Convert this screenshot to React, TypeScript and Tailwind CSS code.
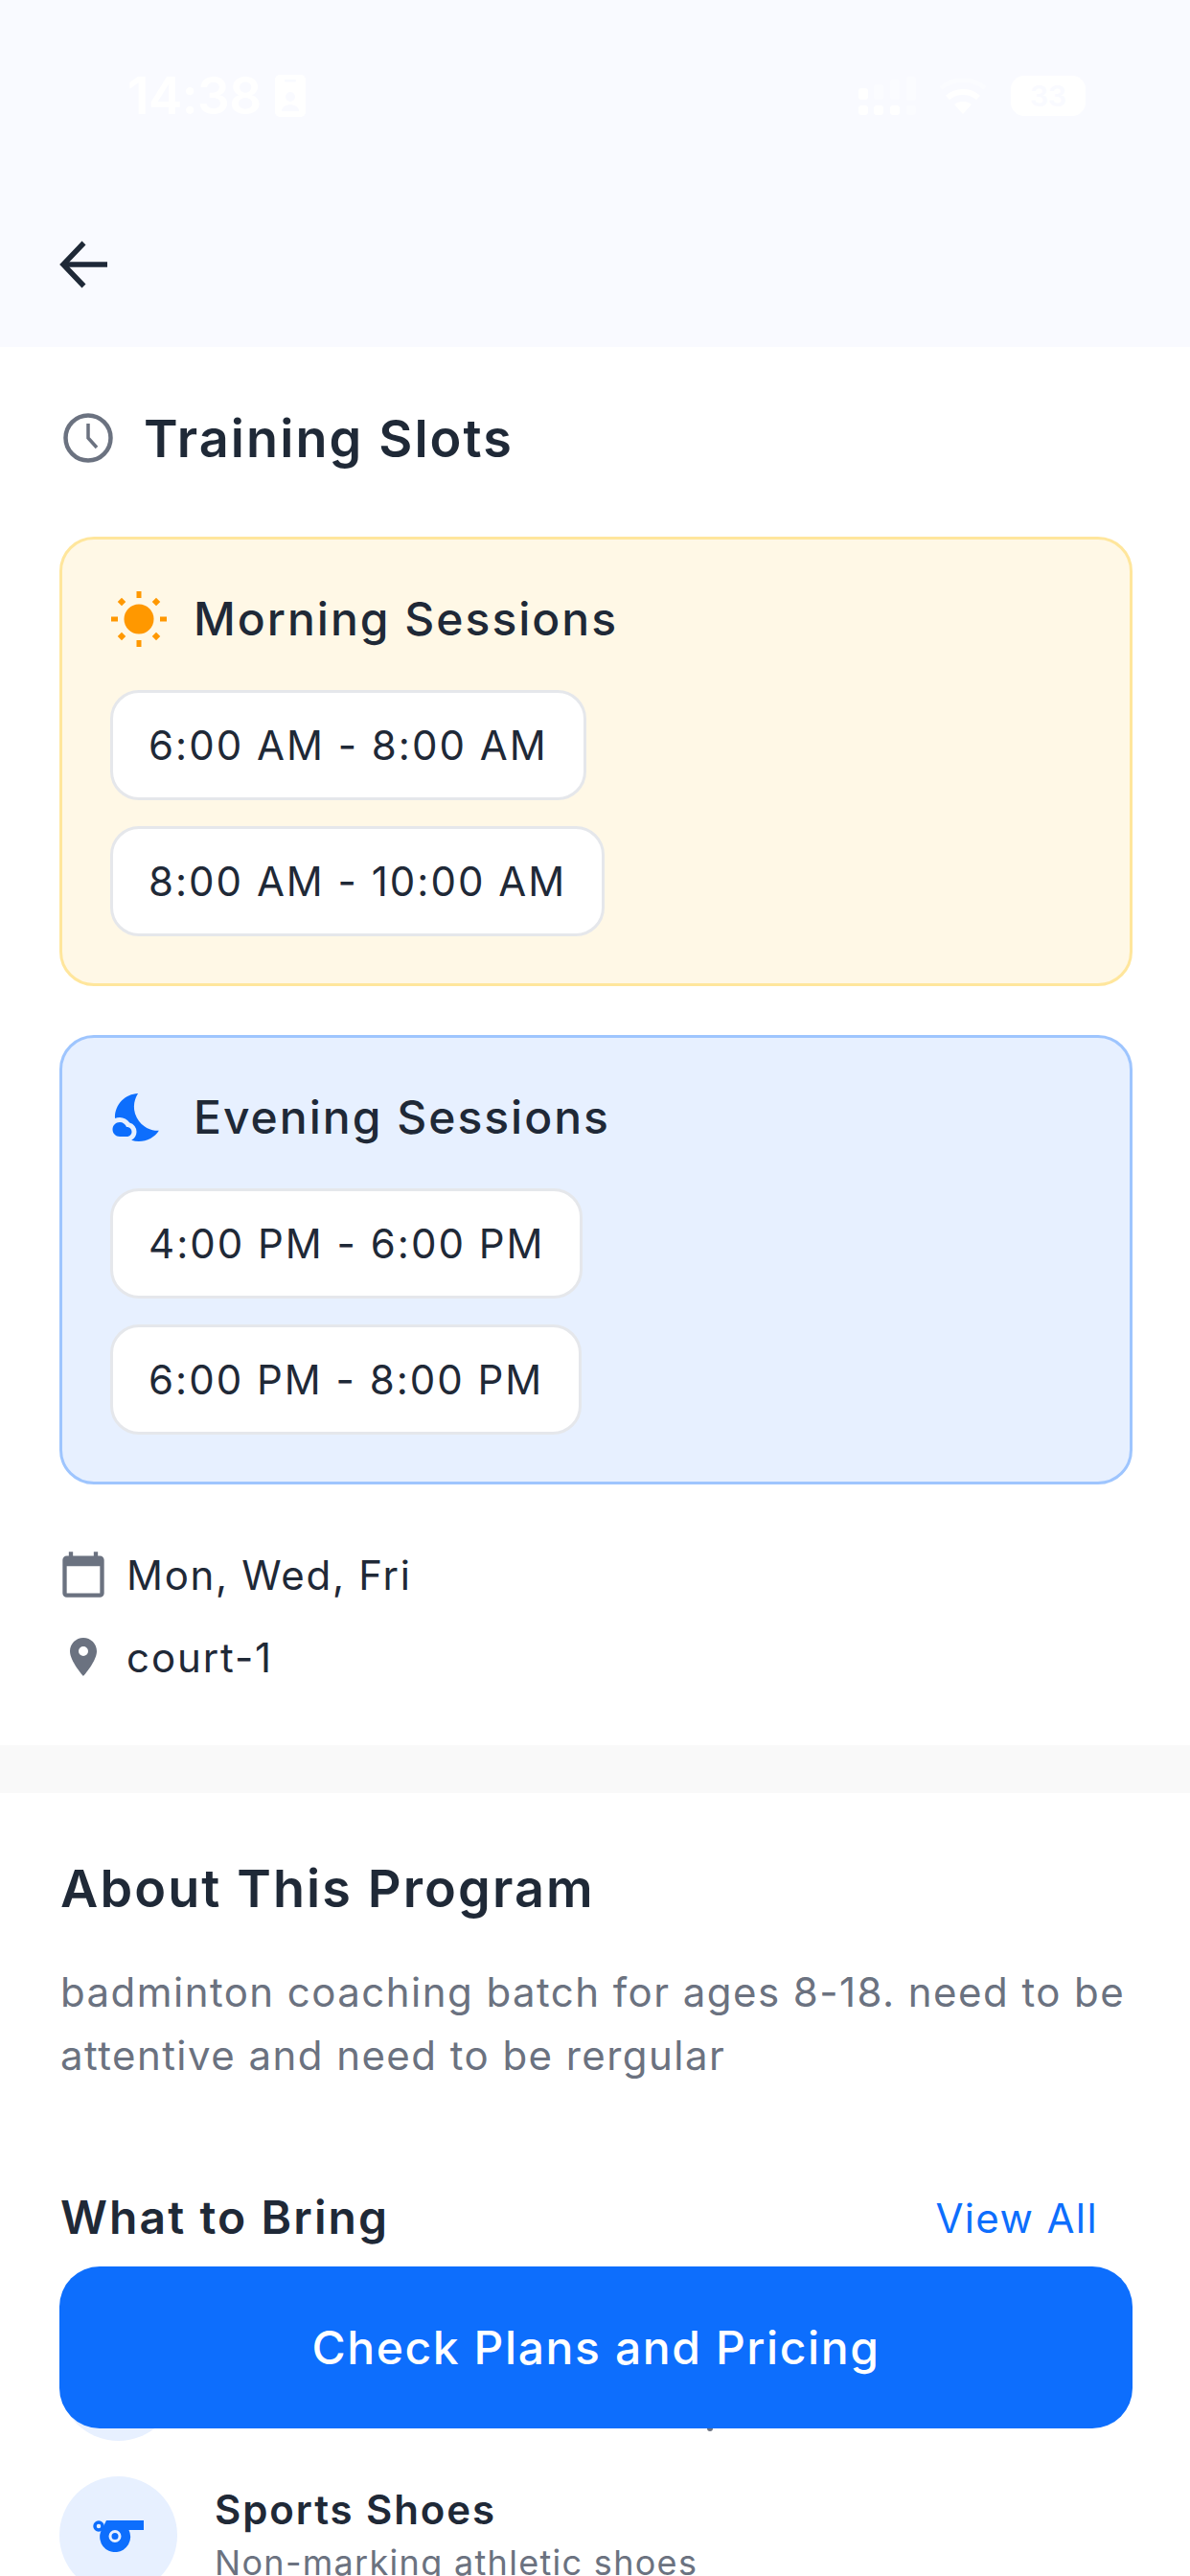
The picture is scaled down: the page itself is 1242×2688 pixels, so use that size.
import React from 'react';
import { MdCalendarToday, MdLocationOn, MdNightsStay } from 'react-icons/md';

const SunIcon = () => (
  <svg viewBox="0 0 60 60" className="w-[60px] h-[60px]" fill="#FF9800">
    <circle cx="30" cy="30" r="15.5" />
    <rect x="27.5" y="1" width="5" height="7" />
    <rect x="27.5" y="52" width="5" height="7" />
    <rect x="1" y="27.5" width="7" height="5" />
    <rect x="52" y="27.5" width="7" height="5" />
    <rect x="9" y="9" width="6" height="6" transform="rotate(45 12 12)" />
    <rect x="45" y="9" width="6" height="6" transform="rotate(45 48 12)" />
    <rect x="9" y="45" width="6" height="6" transform="rotate(45 12 48)" />
    <rect x="45" y="45" width="6" height="6" transform="rotate(45 48 48)" />
  </svg>
);

const WhistleIcon = () => (
  <svg viewBox="0 0 54 34" className="w-[54px] h-[34px]" fill="#0D6EFD">
    <circle cx="6" cy="7" r="4" fill="none" stroke="#0D6EFD" strokeWidth="3.5" />
    <path d="M14 1H53V11H37.5A16 16 0 1 1 8 13 L14 1Z" />
    <circle cx="23" cy="17.5" r="5" fill="none" stroke="#E7F0FF" strokeWidth="3" />
  </svg>
);

const ContactIcon = () => (
  <svg viewBox="0 0 32 44" className="w-[32px] h-[44px]">
    <rect width="32" height="44" rx="5" fill="white" />
    <rect x="10" y="5" width="12" height="2.5" rx="1" fill="#F9FAFF" />
    <circle cx="16" cy="23" r="5" fill="#F9FAFF" />
    <path d="M7 38C7 29 25 29 25 38Z" fill="#F9FAFF" />
  </svg>
);

const SignalIcon = () => (
  <svg viewBox="0 0 60 40" className="w-[60px] h-[40px]" fill="white">
    <rect x="0" y="12" width="10" height="12" rx="3" />
    <rect x="0" y="30" width="10" height="10" rx="3" />
    <rect x="16" y="30" width="10" height="10" rx="3" />
    <rect x="33" y="30" width="10" height="10" rx="3" />
    <rect x="50" y="30" width="10" height="10" rx="3" opacity="0.35" />
    <rect x="16" y="8" width="10" height="16" rx="2" opacity="0.35" />
    <rect x="33" y="3" width="10" height="21" rx="2" opacity="0.35" />
    <rect x="50" y="0" width="10" height="25" rx="2" opacity="0.35" />
  </svg>
);

const WifiIcon = () => (
  <svg viewBox="0 0 50 40" className="w-[50px] h-[40px]" fill="none" stroke="white">
    <path d="M2 12C14 1 36 1 48 12" strokeWidth="5" opacity="0.35" />
    <path d="M9 22C18 14 32 14 41 22" strokeWidth="6" />
    <path d="M16 29C21 25 29 25 34 29L25 39Z" fill="white" stroke="none" />
  </svg>
);

const Slot = ({ text }: { text: string }) => (
  <div className="self-start h-[115px] px-[37px] flex items-center bg-white border-[3px] border-[#E5E7EB] rounded-[30px] text-[42px] tracking-[2px] text-[#1F2937]">
    {text}
  </div>
);

const SessionCard = ({
  title,
  icon,
  slots,
  box,
}: {
  title: string;
  icon: React.ReactNode;
  slots: string[];
  box: string;
}) => (
  <div className={`border-[3px] rounded-[36px] pt-[53px] pb-[49px] pl-[50px] pr-[50px] flex flex-col ${box}`}>
    <div className="flex items-center h-[60px] mb-[44px]">
      <div className="w-[87px] flex items-center">{icon}</div>
      <span className="text-[48px] font-medium tracking-[2px] text-[#1F2937]">{title}</span>
    </div>
    <div className="flex flex-col gap-[27px]">
      {slots.map((s) => (
        <Slot key={s} text={s} />
      ))}
    </div>
  </div>
);

export default function App() {
  return (
    <div className="relative h-[2688px] overflow-hidden bg-white font-['Inter',sans-serif]">
      {/* Header */}
      <div className="h-[362px] bg-[#F9FAFF] flex flex-col">
        <div className="h-[48px] mt-[76px] pl-[133px] pr-[109px] flex items-center justify-between text-white">
          <div className="flex items-center gap-[14px]">
            <span className="text-[53px] font-semibold leading-none tracking-[-0.5px]">14:38</span>
            <ContactIcon />
          </div>
          <div className="flex items-center gap-[24px]">
            <SignalIcon />
            <WifiIcon />
            <div className="w-[78px] h-[42px] bg-white rounded-[14px] flex items-center justify-center text-[30px] font-semibold text-[#F9FAFF] ml-[1px]">
              33
            </div>
          </div>
        </div>
        <div className="mt-[127px] pl-[62px]">
          <svg viewBox="0 0 50 50" className="w-[50px] h-[50px]" fill="none" stroke="#1F2937" strokeWidth="5.5">
            <path d="M25.5 2.5 L4 25 L25.5 47.5" />
            <path d="M4 25H50" />
          </svg>
        </div>
      </div>

      {/* Training slots */}
      <div className="pl-[62px] pr-[60px] pt-[62px] pb-[62px]">
        <div className="flex items-center h-[66px] mb-[70px]">
          <svg viewBox="0 0 54 54" className="w-[54px] h-[54px] ml-[3px] mr-[31px]" fill="none" stroke="#6B7280" strokeWidth="4.5">
            <circle cx="27" cy="27" r="23.5" />
            <path d="M27 12V27L36 37" strokeWidth="3.5" />
          </svg>
          <h2 className="text-[54px] font-semibold tracking-[2.1px] text-[#1F2937]">Training Slots</h2>
        </div>

        <div className="flex flex-col gap-[51px]">
          <SessionCard
            title="Morning Sessions"
            icon={<SunIcon />}
            box="bg-[#FFF8E6] border-[#FFE69C]"
            slots={['6:00 AM - 8:00 AM', '8:00 AM - 10:00 AM']}
          />
          <SessionCard
            title="Evening Sessions"
            icon={<MdNightsStay size={60} color="#0D6EFD" />}
            box="bg-[#E7F0FF] border-[#9EC5FE]"
            slots={['4:00 PM - 6:00 PM', '6:00 PM - 8:00 PM']}
          />
        </div>

        <div className="flex flex-col gap-[26px] mt-[64px]">
          <div className="flex items-center h-[60px]">
            <div className="w-[54px] -ml-[2px] mr-[18px] flex justify-center">
              <MdCalendarToday size={52} color="#6B7280" />
            </div>
            <span className="text-[42px] tracking-[1.7px] text-[#1F2937]">Mon, Wed, Fri</span>
          </div>
          <div className="flex items-center h-[60px]">
            <div className="w-[54px] -ml-[2px] mr-[18px] flex justify-center">
              <MdLocationOn size={48} color="#6B7280" />
            </div>
            <span className="text-[42px] tracking-[1.9px] text-[#1F2937]">court-1</span>
          </div>
        </div>
      </div>

      <div className="h-[50px] bg-[#F9F9F9]" />

      {/* About */}
      <div className="pl-[63px] pr-[60px] pt-[67px]">
        <h2 className="text-[54px] leading-[66px] font-semibold tracking-[2.1px] text-[#1F2937]">About This Program</h2>
        <p className="mt-[42px] text-[42px] leading-[66px] tracking-[1.45px] text-[#6B7280]">
          badminton coaching batch for ages 8-18. need to be attentive and need to be rergular
        </p>

        <div className="flex items-center justify-between h-[60px] mt-[106px] pr-[36px]">
          <h3 className="text-[48px] font-semibold tracking-[2.1px] text-[#1F2937]">What to Bring</h3>
          <span className="text-[42px] tracking-[1.4px] text-[#0D6EFD]">View All</span>
        </div>

        <div className="flex flex-col gap-[37px] mt-[80px] -ml-[1px]">
          {/* this row sits almost entirely behind the button */}
          <div className="flex items-start">
            <div className="w-[123px] h-[123px] rounded-full bg-[#E7F0FF]" />
          </div>
          <div className="flex items-start">
            <div className="w-[123px] h-[123px] rounded-full bg-[#E7F0FF] flex items-center justify-center shrink-0">
              <WhistleIcon />
            </div>
            <div className="ml-[39px] pt-[8px]">
              <div className="text-[42px] leading-[54px] font-semibold tracking-[1.9px] text-[#1F2937]">Sports Shoes</div>
              <div className="mt-[4px] text-[36px] leading-[48px] tracking-[1.3px] text-[#6B7280]">Non-marking athletic shoes</div>
            </div>
          </div>
        </div>
      </div>

      {/* Fixed CTA */}
      <button className="absolute left-[62px] right-[60px] top-[2365px] h-[169px] rounded-[42px] bg-[#0D6EFD] text-white text-[48px] font-medium tracking-[1.6px]">
        Check Plans and Pricing
      </button>
      <div className="absolute left-[738px] top-[2534px] w-[6px] h-[3px] rounded-b-full bg-[#6B7280]" />
    </div>
  );
}
